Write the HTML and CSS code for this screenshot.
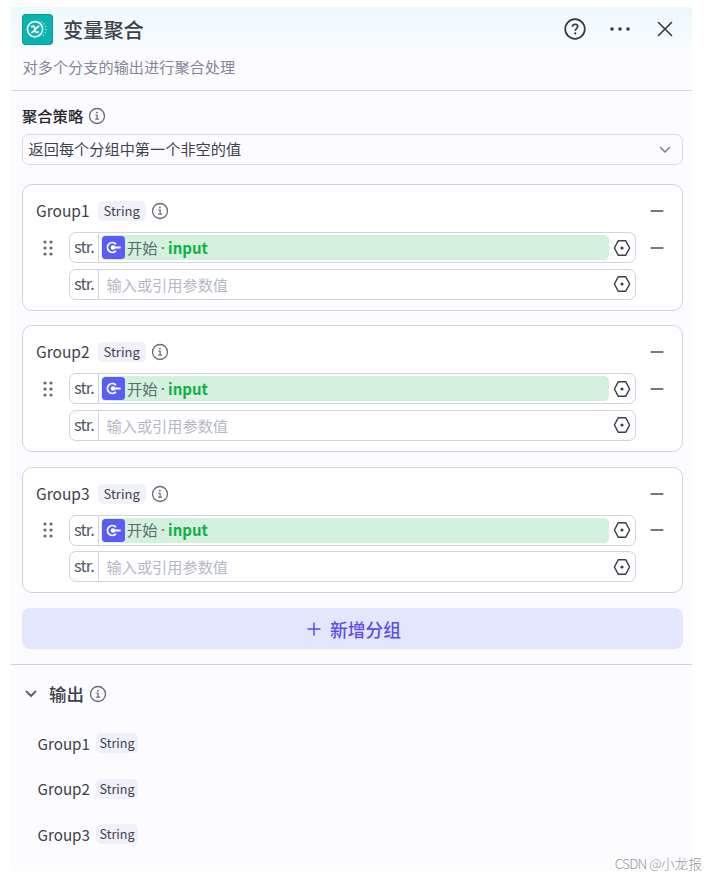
FILE: index.html
```html
<!DOCTYPE html>
<html lang="zh-CN">
<head>
<meta charset="utf-8">
<title>变量聚合</title>
<link rel="stylesheet" href="styles.css">
</head>
<body>
<svg class="symbols" aria-hidden="true">
  <symbol id="info" viewBox="0 0 18 18"><circle cx="9" cy="9" r="7.5" fill="none" stroke="currentColor" stroke-width="1.3"/><circle cx="8.9" cy="5.6" r=".95" fill="currentColor"/><path d="M7.4 8.1h1.7v4M7.2 12.2h3.8" fill="none" stroke="currentColor" stroke-width="1.2"/></symbol>
  <symbol id="minus" viewBox="0 0 14 14"><path d="M1.2 7h11.6" stroke="currentColor" stroke-width="1.5" stroke-linecap="round"/></symbol>
  <symbol id="hex" viewBox="0 0 18 18"><path d="M5.2 1.8h7.6L16.6 9l-3.8 7.2H5.2L1.4 9z" fill="none" stroke="currentColor" stroke-width="1.45" stroke-linejoin="round"/><circle cx="9" cy="9" r="1.6" fill="currentColor"/></symbol>
  <symbol id="grip" viewBox="0 0 10 16"><g fill="currentColor"><circle cx="2" cy="2" r="1.6"/><circle cx="8" cy="2" r="1.6"/><circle cx="2" cy="8" r="1.6"/><circle cx="8" cy="8" r="1.6"/><circle cx="2" cy="14" r="1.6"/><circle cx="8" cy="14" r="1.6"/></g></symbol>
  <symbol id="start" viewBox="0 0 23 23"><rect width="23" height="23" rx="3.5" fill="#5a5cf8"/><path d="M13.5 7.700A4.900 4.900 0 1 0 13.500 15.300" fill="none" stroke="#fff" stroke-width="1.8" stroke-linecap="round"/><circle cx="11" cy="11.500" r="2.300" fill="#fff"/><path d="M11 11.500h7" stroke="#fff" stroke-width="1.800" stroke-linecap="round"/></symbol>
</svg>
<main class="panel">
  <header class="header">
    <div class="title-row">
      <svg class="logo" viewBox="0 0 31 31"><rect width="31" height="31" rx="4" fill="#0bb3ae"/><rect x=".5" y=".5" width="30" height="30" rx="3.5" fill="none" stroke="#0b9d99"/><circle cx="13" cy="15.3" r="7.6" fill="none" stroke="#effffb" stroke-width="1.7"/><path d="M9.700 12.700c2-1.200 2.800-.2 3.200 2.600.4 2.800 1.300 3.800 3.300 2.600M16.600 12.300c-2 .2-4.400 6.200-6.800 6" fill="none" stroke="#fff" stroke-width="1.700" stroke-linecap="round"/><path d="M19.200 8.200a7.600 7.600 0 0 1 0 14.200" fill="none" stroke="#a5e4df" stroke-width="1.500" stroke-linecap="round" stroke-dasharray=".1 3"/></svg>
      <h1>变量聚合</h1>
      <div class="actions">
        <svg class="help" viewBox="0 0 22 22"><circle cx="11" cy="11" r="9.8" fill="none" stroke="currentColor" stroke-width="1.7"/><path d="M8.5 8.8c0-3.5 5.2-3.3 5.2-.2 0 2-2.5 2-2.5 4.2" fill="none" stroke="currentColor" stroke-width="1.7"/><circle cx="11.2" cy="15.4" r="1.1" fill="currentColor"/></svg>
        <svg class="more" viewBox="0 0 22 6"><g fill="currentColor"><circle cx="3" cy="3" r="1.8"/><circle cx="11" cy="3" r="1.8"/><circle cx="19" cy="3" r="1.8"/></g></svg>
        <svg class="close" viewBox="0 0 16 16"><path d="M1.500 1.500l13 13M14.500 1.500l-13 13" stroke="currentColor" stroke-width="1.600" stroke-linecap="round"/></svg>
      </div>
    </div>
    <p class="desc">对多个分支的输出进行聚合处理</p>
  </header>

  <section class="config">
    <div class="label"><span>聚合策略</span><svg class="info"><use href="#info"/></svg></div>
    <div class="select"><span>返回每个分组中第一个非空的值</span><svg class="caret" viewBox="0 0 12 8"><path d="M1.500 1.500L6 6l4.500-4.500" fill="none" stroke="currentColor" stroke-width="1.400" stroke-linecap="round"/></svg></div>

    <div class="groups">
      <article class="group">
        <div class="group-head"><span class="name">Group1</span><span class="tag">String</span><svg class="info"><use href="#info"/></svg><svg class="minus"><use href="#minus"/></svg></div>
        <div class="row"><svg class="grip"><use href="#grip"/></svg><div class="field"><span class="type">str.</span><div class="ref"><svg class="start"><use href="#start"/></svg><span class="source">开始</span><span class="sep">·</span><b>input</b></div><svg class="hex"><use href="#hex"/></svg></div><svg class="minus"><use href="#minus"/></svg></div>
        <div class="row"><div class="field"><span class="type">str.</span><span class="placeholder">输入或引用参数值</span><svg class="hex"><use href="#hex"/></svg></div></div>
      </article>
      <article class="group">
        <div class="group-head"><span class="name">Group2</span><span class="tag">String</span><svg class="info"><use href="#info"/></svg><svg class="minus"><use href="#minus"/></svg></div>
        <div class="row"><svg class="grip"><use href="#grip"/></svg><div class="field"><span class="type">str.</span><div class="ref"><svg class="start"><use href="#start"/></svg><span class="source">开始</span><span class="sep">·</span><b>input</b></div><svg class="hex"><use href="#hex"/></svg></div><svg class="minus"><use href="#minus"/></svg></div>
        <div class="row"><div class="field"><span class="type">str.</span><span class="placeholder">输入或引用参数值</span><svg class="hex"><use href="#hex"/></svg></div></div>
      </article>
      <article class="group">
        <div class="group-head"><span class="name">Group3</span><span class="tag">String</span><svg class="info"><use href="#info"/></svg><svg class="minus"><use href="#minus"/></svg></div>
        <div class="row"><svg class="grip"><use href="#grip"/></svg><div class="field"><span class="type">str.</span><div class="ref"><svg class="start"><use href="#start"/></svg><span class="source">开始</span><span class="sep">·</span><b>input</b></div><svg class="hex"><use href="#hex"/></svg></div><svg class="minus"><use href="#minus"/></svg></div>
        <div class="row"><div class="field"><span class="type">str.</span><span class="placeholder">输入或引用参数值</span><svg class="hex"><use href="#hex"/></svg></div></div>
      </article>
    </div>

    <div class="add"><svg class="plus" viewBox="0 0 14 14"><path d="M7 .5v13M.5 7h13" stroke="currentColor" stroke-width="1.5"/></svg><span>新增分组</span></div>
  </section>

  <section class="output">
    <div class="output-head"><svg class="chevron" viewBox="0 0 12 8"><path d="M1.500 1.500L6 6l4.500-4.500" fill="none" stroke="currentColor" stroke-width="1.800" stroke-linecap="round" stroke-linejoin="round"/></svg><h2>输出</h2><svg class="info"><use href="#info"/></svg></div>
    <ul>
      <li><span class="name">Group1</span><span class="tag">String</span></li>
      <li><span class="name">Group2</span><span class="tag">String</span></li>
      <li><span class="name">Group3</span><span class="tag">String</span></li>
    </ul>
  </section>
</main>
<div class="watermark"><span>CSDN @</span>小龙报</div>
</body>
</html>
```
FILE: styles.css
```css
* { box-sizing: border-box; }
body {
  margin: 0;
  padding: 7px 21px 0 11px;
  height: 877px;
  overflow: hidden;
  background: #fff;
  color: #3e414d;
  font-family: "Noto Sans CJK SC", sans-serif;
}
h1, h2, p, ul { margin: 0; padding: 0; }
svg { display: block; flex: none; }
.symbols { position: absolute; width: 0; height: 0; }

.panel { height: 864px; background: #fcfcff; }

.header { height: 84px; border-bottom: 1px solid #d6d6dd; }
.title-row {
  display: flex;
  align-items: center;
  height: 45px;
  padding: 0 19px 0 11px;
  background: linear-gradient(#eef9fb, #f8fcff);
}
.logo { width: 31px; height: 31px; }
h1 { margin-left: 10px; font-size: 20.2px; font-weight: 500; line-height: 30px; }
.actions { display: flex; align-items: center; margin: -2px 0 0 auto; color: #343744; }
.help { width: 22px; height: 22px; }
.more { width: 22px; height: 6px; margin-left: 23px; }
.close { width: 16px; height: 16px; margin-left: 26px; }
.desc { padding: 3px 12px 0 11.500px; font-size: 15.2px; line-height: 23px; color: #85859a; }

.config { height: 574px; padding: 13px 9px 0 11px; border-bottom: 1px solid #d2d2dc; }
.label { display: flex; align-items: center; height: 23px; font-size: 15.3px; font-weight: 500; color: #24262f; }
.label span { margin-top: -2px; }
.info { width: 18px; height: 18px; color: #686b77; }
.label .info { margin-left: 5px; }
.select {
  display: flex;
  align-items: center;
  justify-content: space-between;
  height: 31px;
  margin-top: 7px;
  padding: 0 11px 2px 5.500px;
  border: 1px solid #d9dae1;
  border-radius: 7px;
  font-size: 15.2px;
  line-height: 23px;
}
.caret { width: 12px; height: 8px; margin-top: 3px; color: #777a86; }

.groups { display: flex; flex-direction: column; gap: 14.500px; margin-top: 19px; }
.group {
  height: 126.800px;
  padding: 14px 18px 0 13px;
  border: 1px solid #d3d3df;
  border-radius: 10px;
  background: #fff;
}
.group-head { display: flex; align-items: center; height: 24px; margin-bottom: 9px; }
.name { font-size: 15.500px; line-height: 23px; }
.group-head .name { margin-top: -1px; }
.tag {
  padding: 0 6px;
  border-radius: 5px;
  background: #f1f2f9;
  font-size: 13px;
  line-height: 20px;
}
.group-head .tag { margin-left: 8px; }
.group-head .info { margin-left: 5.400px; }
.minus { width: 14px; height: 14px; margin-left: auto; color: #4b4e59; }
.row { display: flex; align-items: center; height: 31px; margin-bottom: 5.500px; }
.grip { width: 10px; height: 16px; margin: 0 -17px 0 7px; color: #656875; }
.field {
  display: flex;
  align-items: center;
  width: 567px;
  height: 31px;
  margin-left: 33px;
  padding-right: 4px;
  border: 1px solid #d3d3dd;
  border-radius: 7px;
}
.type {
  flex: none;
  width: 29px;
  height: 100%;
  padding-left: 4px;
  border-right: 1px solid #d3d3dd;
  font-size: 16.500px;
  letter-spacing: -.9px;
  line-height: 26px;
  color: #555967;
}
.ref {
  display: flex;
  align-items: center;
  flex: none;
  width: 508px;
  height: 25px;
  margin-left: 2px;
  padding-left: 1px;
  border-radius: 5px;
  background: #d3f1dc;
  font-size: 15.300px;
  line-height: 22px;
}
.ref span { margin-top: -2px; }
.start { width: 23px; height: 23px; }
.ref .source { margin-left: 2px; color: #5b6c6b; }
.sep { flex: none; width: 10.500px; text-align: center; font-family: "Noto Sans", sans-serif; color: #51655d; }
.ref b { font-size: 15px; font-weight: 700; color: #0fb044; }
.placeholder { margin: -1px 0 0 7.500px; font-size: 15.200px; line-height: 24px; color: #b5b8c5; }
.hex { width: 18px; height: 18px; margin-left: auto; color: #3c3f4a; }

.add {
  display: flex;
  align-items: center;
  justify-content: center;
  gap: 9px;
  height: 41px;
  margin-top: 15px;
  padding-left: 3px;
  border-radius: 8px;
  background: #e4e6fd;
  color: #5a4ee8;
  font-size: 17.700px;
  font-weight: 500;
}
.plus { width: 14px; height: 14px; }

.output { padding: 15px 14px 0; }
.output-head { display: flex; align-items: center; height: 27px; }
.chevron { width: 12px; height: 8px; color: #5b5e6a; }
h2 { margin-left: 12px; font-size: 17.500px; font-weight: 500; line-height: 27px; }
.output .info { margin-left: 5px; }
ul { margin-top: 13.500px; padding-left: 12.500px; list-style: none; }
li { display: flex; align-items: center; height: 45.500px; }
li .name { font-size: 15.200px; }
li .tag { margin-left: 6px; padding: 0 3.500px; background: #f0f0fa; font-size: 12.600px; }

.watermark {
  position: absolute;
  right: 11px;
  bottom: 4px;
  font-size: 13.700px;
  line-height: 20px;
  font-weight: 300;
  color: #99999c;
}
.watermark span { letter-spacing: -.9px; word-spacing: 1px; }
```
